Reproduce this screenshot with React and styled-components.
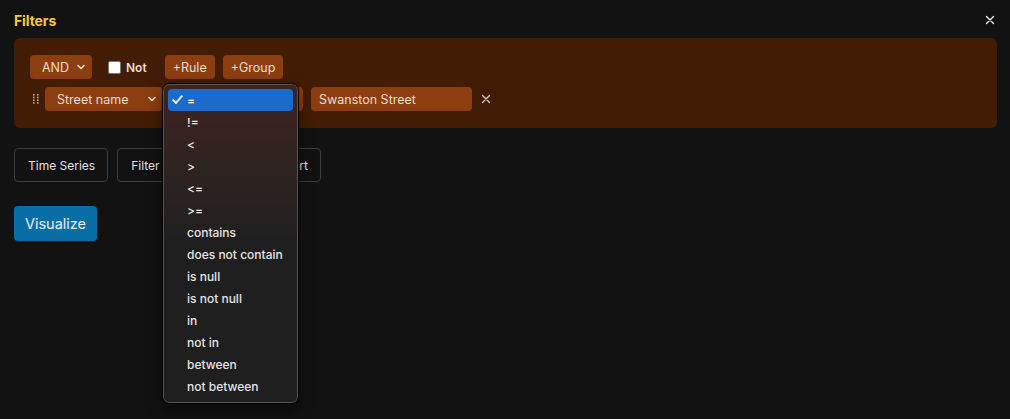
import React from "react";
import styled, { createGlobalStyle } from "styled-components";

const Global = createGlobalStyle`
  html, body { margin: 0; padding: 0; background: #121212; }
  body { font-family: Inter, "Noto Sans", "Liberation Sans", sans-serif; color: #e6e6e6; }
  * { box-sizing: border-box; }
`;

const Page = styled.div`
  width: 1010px;
  height: 419px;
  padding: 10px 13px 0 14px;
  position: relative;
  background: #121212;
`;

const Header = styled.div`
  display: flex;
  justify-content: space-between;
  align-items: center;
  height: 20px;
`;

const Title = styled.h2`
  margin: 0;
  font-size: 14px;
  font-weight: 700;
  color: #f4c84a;
  letter-spacing: -0.1px;
`;

const Close = styled.button`
  background: none;
  border: none;
  color: #e8e8e8;
  padding: 0;
  width: 14px;
  height: 14px;
  display: flex;
  align-items: center;
  justify-content: center;
`;

const Panel = styled.div`
  margin-top: 8px;
  width: 983px;
  height: 90px;
  background: #431c05;
  border-radius: 6px;
  padding: 17px 16px 0 16px;
  display: flex;
  flex-direction: column;
  gap: 8px;
`;

const Row = styled.div`
  display: flex;
  align-items: center;
  height: 24px;
  position: relative;
`;

const SelectBox = styled.div`
  height: 24px;
  width: ${(p) => p.$w}px;
  background: #8c3e10;
  border-radius: 4px;
  display: flex;
  align-items: center;
  justify-content: space-between;
  padding: 0 6px 0 ${(p) => p.$pl || 12}px;
  font-size: 12.5px;
  color: #eadccf;
  margin-left: ${(p) => p.$ml || 0}px;
  position: relative;
`;

const ActionButton = styled.button`
  height: 24px;
  background: #8c3e10;
  border: none;
  border-radius: 4px;
  padding: 0 8px;
  font-family: inherit;
  font-size: 12.5px;
  color: #eadccf;
  margin-left: ${(p) => p.$ml || 0}px;
`;

const NotLabel = styled.label`
  display: flex;
  align-items: center;
  gap: 5px;
  font-size: 12px;
  font-weight: 600;
  color: #e8dcd0;
  margin-left: ${(p) => p.$ml || 0}px;
`;

const Box = styled.span`
  width: 13px;
  height: 13px;
  background: #fff;
  border: 1px solid #777;
  border-radius: 2px;
  display: inline-block;
`;

const Handle = styled.span`
  width: 11px;
  display: flex;
  justify-content: center;
`;

const ValueInput = styled.div`
  height: 24px;
  width: 161px;
  background: #8c3e10;
  border-radius: 4px;
  padding: 0 8px;
  display: flex;
  align-items: center;
  font-size: 12.5px;
  color: #eadccf;
  margin-left: ${(p) => p.$ml || 0}px;
`;

const Remove = styled.button`
  background: none;
  border: none;
  padding: 0;
  margin-left: 6px;
  display: flex;
  align-items: center;
`;

const Tabs = styled.div`
  display: flex;
  gap: 9px;
  margin-top: 20px;
`;

const OutlineButton = styled.button`
  height: 34px;
  padding: 0 12px 0 13px;
  background: transparent;
  border: 1px solid #3d3d3d;
  border-radius: 4px;
  font-family: inherit;
  font-size: 12px;
  color: #e2e2e2;
`;

const Visualize = styled.button`
  margin-top: 24px;
  height: 35px;
  width: 83px;
  background: #0a6ea6;
  border: none;
  border-radius: 4px;
  font-family: inherit;
  font-size: 14.5px;
  color: #e9eef2;
  display: flex;
  align-items: center;
  justify-content: center;
`;

const Menu = styled.ul`
  position: absolute;
  left: -8px;
  top: -3px;
  width: 135px;
  margin: 0;
  padding: 4px 4px 5px 4px;
  list-style: none;
  border: 1px solid #5b5352;
  outline: 1px solid #000;
  border-radius: 6px;
  background: linear-gradient(180deg, #3e231f 0%, #2c2321 30%, #1f1f1f 50%, #1f1f1f 100%);
  box-shadow: 0 6px 16px rgba(0, 0, 0, 0.5);
  z-index: 10;
`;

const MenuItem = styled.li`
  height: 22px;
  display: flex;
  align-items: center;
  padding-left: 19px;
  position: relative;
  font-size: 12px;
  font-weight: 500;
  border-radius: 4px;
  background: ${(p) => (p.$active ? "#1a6bcb" : "transparent")};
  color: ${(p) => (p.$active ? "#fff" : "#e4e4e4")};
`;

const Check = styled.svg`
  position: absolute;
  left: 4px;
  top: 6px;
`;

const Chevron = () => (
  <svg width="10" height="10" viewBox="0 0 10 10">
    <path d="M2 3.5 L5 6.5 L8 3.5" fill="none" stroke="#eadccf" strokeWidth="1.6" strokeLinecap="round" strokeLinejoin="round" />
  </svg>
);

const ops = ["=", "!=", "<", ">", "<=", ">=", "contains", "does not contain", "is null", "is not null", "in", "not in", "between", "not between"];

export default function App() {
  return (
    <Page>
      <Global />
      <Header>
        <Title>Filters</Title>
        <Close aria-label="close">
          <svg width="10" height="10" viewBox="0 0 10 10">
            <path d="M1.5 1.5 L8.5 8.5 M8.5 1.5 L1.5 8.5" stroke="#eee" strokeWidth="1.4" strokeLinecap="round" />
          </svg>
        </Close>
      </Header>
      <Panel>
        <Row>
          <SelectBox $w={62}>
            <span>AND</span>
            <Chevron />
          </SelectBox>
          <NotLabel $ml={16}>
            <Box />
            Not
          </NotLabel>
          <ActionButton $ml={18}>+Rule</ActionButton>
          <ActionButton $ml={8}>+Group</ActionButton>
        </Row>
        <Row>
          <Handle>
            <svg width="6" height="10" viewBox="0 0 6 10">
              {[0, 1, 2, 3].map((r) =>
                [0, 1].map((c) => <rect key={r + "-" + c} x={c * 4} y={r * 2.7} width="1.6" height="1.6" fill="#b9a99a" />)
              )}
            </svg>
          </Handle>
          <SelectBox $w={118} $ml={4}>
            <span>Street name</span>
            <Chevron />
          </SelectBox>
          <SelectBox $w={132} $ml={8}>
            <span>=</span>
            <Chevron />
            <Menu>
              {ops.map((o, i) => (
                <MenuItem key={o} $active={i === 0}>
                  {i === 0 && (
                    <Check width="11" height="10" viewBox="0 0 11 10">
                      <path d="M1.2 5.2 L4 8 L9.8 1.2" fill="none" stroke="#fff" strokeWidth="1.8" strokeLinecap="round" strokeLinejoin="round" />
                    </Check>
                  )}
                  {o}
                </MenuItem>
              ))}
            </Menu>
          </SelectBox>
          <ValueInput $ml={8}>Swanston Street</ValueInput>
          <Remove aria-label="remove">
            <svg width="16" height="16" viewBox="0 0 16 16">
              <path d="M4.5 4.5 L11.5 11.5 M11.5 4.5 L4.5 11.5" stroke="#dcd0c6" strokeWidth="1.3" strokeLinecap="round" />
            </svg>
          </Remove>
        </Row>
      </Panel>
      <Tabs>
        <OutlineButton>Time Series</OutlineButton>
        <OutlineButton>Filter</OutlineButton>
        <OutlineButton>Group By</OutlineButton>
        <OutlineButton>Sort</OutlineButton>
      </Tabs>
      <Visualize>Visualize</Visualize>
    </Page>
  );
}
